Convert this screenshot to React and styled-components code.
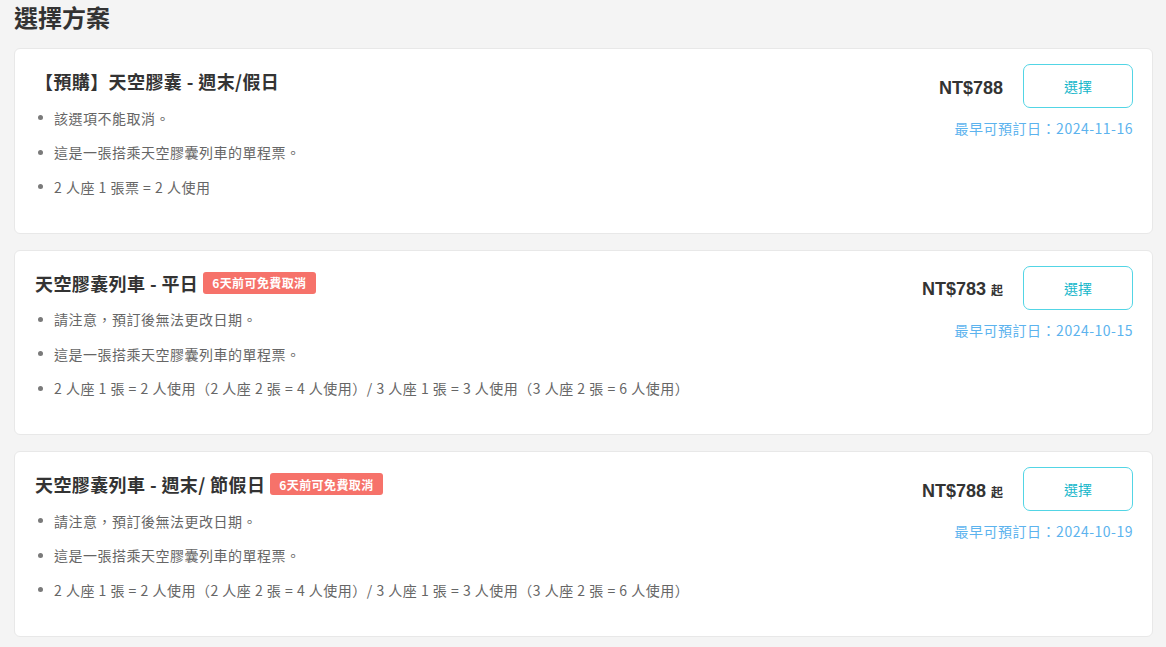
import React from "react";
import styled, { createGlobalStyle } from "styled-components";

const GlobalStyle = createGlobalStyle`
  html, body {
    margin: 0;
    padding: 0;
    background: #f4f4f4;
  }
  body {
    font-family: "Noto Sans CJK TC", "Noto Sans", sans-serif;
    color: #333;
  }
`;

const Page = styled.div`
  padding: 0 13px 10px 14px;
`;

const Heading = styled.h2`
  margin: 0 0 14px 0;
  font-size: 24px;
  line-height: 34px;
  font-weight: 700;
  color: #333;
`;

const CardList = styled.div`
  display: flex;
  flex-direction: column;
  gap: 16px;
`;

const Card = styled.div`
  display: flex;
  justify-content: space-between;
  align-items: flex-start;
  background: #fff;
  border: 1px solid #e8e8e8;
  border-radius: 6px;
  padding: 15px 19px 35px 20px;
`;

const Info = styled.div`
  flex: 1;
  padding-top: 6px;
`;

const TitleRow = styled.div`
  display: flex;
  align-items: center;
  gap: 5px;
  height: 22px;
`;

const Title = styled.h3`
  margin: 0;
  font-size: 18px;
  line-height: 22px;
  font-weight: 700;
  color: #333;
  letter-spacing: 0.4px;
`;

const Badge = styled.span`
  display: inline-flex;
  align-items: center;
  height: 22px;
  padding: 0 9px;
  border-radius: 3px;
  background: #f6726a;
  color: #fff;
  font-size: 12px;
  font-weight: 700;
  letter-spacing: 0.4px;
`;

const Notes = styled.ul`
  list-style: none;
  margin: 0;
  padding: 2px 0 0 3px;
`;

const Note = styled.li`
  display: flex;
  align-items: center;
  margin-top: 12.5px;
  font-size: 14px;
  line-height: 22px;
  color: #666;
  letter-spacing: 0.5px;

  &::before {
    content: "";
    width: 5px;
    height: 5px;
    border-radius: 50%;
    background: #7a7a7a;
    margin-right: 11px;
    flex-shrink: 0;
  }
`;

const Side = styled.div`
  display: flex;
  flex-direction: column;
  align-items: flex-end;
`;

const BuyRow = styled.div`
  display: flex;
  align-items: center;
  gap: 20px;
`;

const Price = styled.div`
  font-family: "Liberation Sans", Arial, sans-serif;
  font-size: 18px;
  font-weight: 700;
  color: #333;
  margin-top: 4px;

  small {
    font-family: "Noto Sans CJK TC", sans-serif;
    font-size: 12px;
    margin-left: 5px;
  }
`;

const SelectButton = styled.button`
  width: 110px;
  height: 44px;
  border: 1px solid #52d5e5;
  border-radius: 7px;
  background: #fff;
  color: #14b6ca;
  font-family: "Noto Sans CJK TC", sans-serif;
  font-size: 14px;
  cursor: pointer;
`;

const Earliest = styled.div`
  margin-top: 10px;
  font-size: 14px;
  line-height: 20px;
  color: #5cb3ee;
  letter-spacing: 0.5px;
`;

const plans = [
  {
    title: "【預購】天空膠囊 - 週末/假日",
    price: "788",
    from: false,
    date: "2024-11-16",
    notes: [
      "該選項不能取消。",
      "這是一張搭乘天空膠囊列車的單程票。",
      "2 人座 1 張票 = 2 人使用",
    ],
  },
  {
    title: "天空膠囊列車 - 平日",
    badge: "6天前可免費取消",
    price: "783",
    from: true,
    date: "2024-10-15",
    notes: [
      "請注意，預訂後無法更改日期。",
      "這是一張搭乘天空膠囊列車的單程票。",
      "2 人座 1 張 = 2 人使用（2 人座 2 張 = 4 人使用）/ 3 人座 1 張 = 3 人使用（3 人座 2 張 = 6 人使用）",
    ],
  },
  {
    title: "天空膠囊列車 - 週末/ 節假日",
    badge: "6天前可免費取消",
    price: "788",
    from: true,
    date: "2024-10-19",
    notes: [
      "請注意，預訂後無法更改日期。",
      "這是一張搭乘天空膠囊列車的單程票。",
      "2 人座 1 張 = 2 人使用（2 人座 2 張 = 4 人使用）/ 3 人座 1 張 = 3 人使用（3 人座 2 張 = 6 人使用）",
    ],
  },
];

export default function App() {
  return (
    <Page>
      <GlobalStyle />
      <Heading>選擇方案</Heading>
      <CardList>
        {plans.map((p, i) => (
          <Card key={i}>
            <Info>
              <TitleRow>
                <Title>{p.title}</Title>
                {p.badge && <Badge>{p.badge}</Badge>}
              </TitleRow>
              <Notes>
                {p.notes.map((n, j) => (
                  <Note key={j}>{n}</Note>
                ))}
              </Notes>
            </Info>
            <Side>
              <BuyRow>
                <Price>
                  NT${p.price}
                  {p.from && <small>起</small>}
                </Price>
                <SelectButton>選擇</SelectButton>
              </BuyRow>
              <Earliest>最早可預訂日：{p.date}</Earliest>
            </Side>
          </Card>
        ))}
      </CardList>
    </Page>
  );
}
